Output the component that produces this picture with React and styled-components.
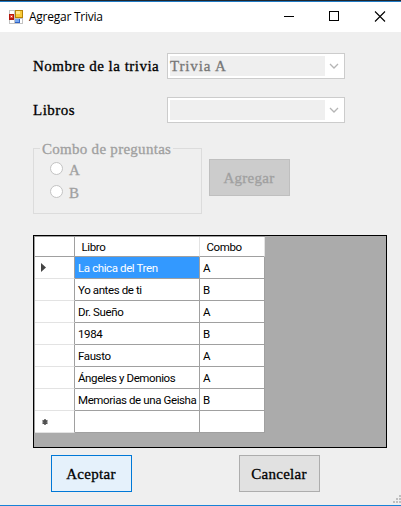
import React from 'react';
import styled, { createGlobalStyle } from 'styled-components';

const GlobalStyle = createGlobalStyle`
  *{box-sizing:border-box}
  body{margin:0;overflow:hidden;background:#efefef}
  button{margin:0;padding:0}
`;
const Window = styled.main`
  width:401px;height:506px;background:#efefef;color:#000;
  border-bottom:1px solid #1883d7;display:flex;flex-direction:column;
  font-family:"Liberation Serif",serif;font-size:15px;letter-spacing:.35px;
  -webkit-text-stroke:.3px currentColor;
`;
const TitleBar = styled.header`
  flex:none;height:32px;background:#fff;border-top:1px solid #20262d;
  box-shadow:inset 0 1px #1f7ac4;display:flex;align-items:center;padding:1px 15px 0 9px;
  font:12px/16px "Open Sans",sans-serif;letter-spacing:-.25px;-webkit-text-stroke:0;
`;
const Title = styled.span`margin-left:6px;flex:1;`;
const Controls = styled.svg`display:block;flex:none;`;
const Content = styled.div`flex:1;position:relative;padding:21px 14px 0 33px;`;
const Field = styled.div`display:grid;grid-template-columns:134px 178px;height:26px;margin-bottom:18px;align-items:center;line-height:20px;white-space:nowrap;letter-spacing:.48px;`;
const Combo = styled.div`
  height:26px;border:1px solid #ccc;background:#fff;padding:2px;display:flex;
  align-items:center;justify-content:space-between;color:#777;
`;
const ComboValue = styled.span`width:155px;height:20px;background:#efefef;line-height:21px;letter-spacing:.85px;`;
const Chevron = styled.svg`width:10px;height:6px;margin-right:3px;`;
const Options = styled.div`display:flex;height:73px;align-items:flex-start;`;
const Group = styled.fieldset`
  margin:0;padding:2px 0 0 16px;width:169px;height:73px;border:1px solid #dcdcdc;color:#a0a0a0;min-width:0;
`;
const Legend = styled.legend`margin-left:-10px;padding:0 2px;height:14px;line-height:17px;white-space:nowrap;letter-spacing:.28px;`;
const Radio = styled.label`display:flex;height:23px;gap:6px;line-height:27px;`;
const Dot = styled.span`width:13px;height:13px;margin-top:5px;border:1px solid #c3c3c3;border-radius:50%;background:#fff;`;
const Button = styled.button`
  width:81px;height:37px;border:1px solid ${p => p.$tone === 'primary' ? '#0078d7' : p.$tone === 'off' ? '#bfbfbf' : '#adadad'};
  background:${p => p.$tone === 'primary' ? '#e5f1fb' : p.$tone === 'off' ? '#ccc' : '#e1e1e1'};
  color:${p => p.$tone === 'off' ? '#a0a0a0' : '#000'};
  font:inherit;letter-spacing:.3px;-webkit-text-stroke:inherit;padding:2px 1px 0 0;
`;
const AddButton = styled(Button)`margin:18px 0 0 7px;`;
const GridView = styled.div`
  width:354px;height:213px;margin-top:21px;border:1px solid #000;background:#ababab;
  font:11.5px/21px Roboto,sans-serif;letter-spacing:-.39px;-webkit-text-stroke:0;
`;
const Table = styled.div`width:231px;border-left:1px solid #a0a0a0;border-top:1px solid #a0a0a0;`;
const Row = styled.div`display:grid;grid-template-columns:40px 125px 65px;height:${p => p.$head ? 20 : 22}px;line-height:${p => p.$head ? 20 : 22}px;`;
const RowHeader = styled.div`
  background:#fff;border-right:1px solid #a0a0a0;border-bottom:1px solid ${p => p.$head ? '#a0a0a0' : '#e3e3e3'};
  display:flex;align-items:center;padding-left:5px;
`;
const Cell = styled.div`
  height:${p => p.$head ? 20 : 22}px;
  background:${p => p.$selected ? '#3399ff' : '#fff'};color:${p => p.$selected ? '#fff' : '#000'};
  border-right:1px solid ${p => p.$head ? '#e3e3e3' : '#a0a0a0'};border-bottom:1px solid #a0a0a0;
  padding-left:${p => p.$head ? 6.5 : 3}px;white-space:nowrap;
`;
const Actions = styled.footer`display:flex;gap:107px;margin:7px 0 0 18px;`;
const Grip = styled.svg`position:absolute;right:0;bottom:2px;`;

const books = [
  ['La chica del Tren', 'A'], ['Yo antes de ti', 'B'], ['Dr. Sueño', 'A'], ['1984', 'B'],
  ['Fausto', 'A'], ['Ángeles y Demonios', 'A'], ['Memorias de una Geisha', 'B'], ['', ''],
];

function FormIcon() {
  return (
    <Controls width="14" height="14" viewBox="0 0 14 14" shapeRendering="crispEdges">
      <path fill="#c3c3c3" d="M0 0h14v14H0z" />
      <path fill="#fff" d="M1 1h4v3H1zM1 10h4v3H1zM11 9h2v4h-2z" />
      <path fill="#b3160c" d="M0 4h5v6H0z" /><path fill="#e7523f" d="M1 5h3v3H1z" /><path fill="#fff" d="M2 6h1v1H2z" />
      <path fill="#b78205" d="M6 0h8v8H6z" /><path fill="#f8ca39" d="M7 1h6v6H7z" /><path fill="#ffe58a" d="M7 1h4v3H7z" />
      <path fill="#2f62c4" d="M6 9h5v4H6z" /><path fill="#78a8f0" d="M6 9h4v3H6z" />
    </Controls>
  );
}
function ComboBox({ value }) {
  return (
    <Combo><ComboValue>{value}</ComboValue>
      <Chevron viewBox="0 0 10 6"><path d="M1 1l4 4 4-4" fill="none" stroke="#b5b5b5" strokeWidth="1.3" /></Chevron>
    </Combo>
  );
}
function RowMark({ index }) {
  if (index === 0) return <svg width="8" height="10"><path d="M1 0v9l5-4.5z" fill="#444" /></svg>;
  if (index === 7) return <svg width="8" height="8"><path d="M5 1v6M2.5 2.5l5 3M2.5 5.5l5-3" stroke="#505050" strokeWidth="1.5" /></svg>;
  return null;
}

export default function App() {
  return (
    <Window>
      <GlobalStyle />
      <TitleBar>
        <FormIcon /><Title>Agregar Trivia</Title>
        <Controls width="102" height="12" viewBox="0 0 102 12" fill="none" stroke="#000">
          <path d="M0 5.5h10M45.5 .5h9v9h-9z" shapeRendering="crispEdges" /><path d="M91 .5l10 10M101 .5L91 10.5" strokeWidth="1.1" />
        </Controls>
      </TitleBar>
      <Content>
        <Field><span>Nombre de la trivia</span><ComboBox value="Trivia A" /></Field>
        <Field><span>Libros</span><ComboBox /></Field>
        <Options>
          <Group><Legend>Combo de preguntas</Legend><Radio><Dot />A</Radio><Radio><Dot />B</Radio></Group>
          <AddButton $tone="off">Agregar</AddButton>
        </Options>
        <GridView>
          <Table>
            <Row $head><RowHeader $head /><Cell $head>Libro</Cell><Cell $head>Combo</Cell></Row>
            {books.map(([book, combo], i) => (
              <Row key={i}><RowHeader><RowMark index={i} /></RowHeader><Cell $selected={i === 0}>{book}</Cell><Cell>{combo}</Cell></Row>
            ))}
          </Table>
        </GridView>
        <Actions><Button $tone="primary">Aceptar</Button><Button>Cancelar</Button></Actions>
        <Grip width="8" height="8" fill="#bfbfbf" shapeRendering="crispEdges">
          <path d="M6 0h2v2H6zM3 3h2v2H3zM6 3h2v2H6zM0 6h2v2H0zM3 6h2v2H3zM6 6h2v2H6z" />
        </Grip>
      </Content>
    </Window>
  );
}
